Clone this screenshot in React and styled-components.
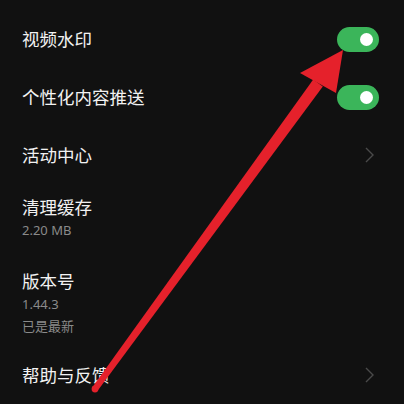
import React from "react";
import styled, { createGlobalStyle } from "styled-components";

const Global = createGlobalStyle`
  html, body { margin: 0; padding: 0; background: #111111; }
  body { font-family: "Noto Sans", "Noto Sans CJK SC", sans-serif; }
`;

const Page = styled.div`
  position: relative;
  width: 404px;
  height: 404px;
  overflow: hidden;
  background: #111111;
  padding-top: 10px;
  box-sizing: border-box;
`;

const Row = styled.div`
  display: flex;
  align-items: center;
  justify-content: space-between;
  padding: ${(p) => p.$pt ?? 0}px 25px ${(p) => p.$pb ?? 0}px 22px;
  min-height: ${(p) => (p.$single ? 58 : 0)}px;
  box-sizing: border-box;
`;

const TextCol = styled.div`
  display: flex;
  flex-direction: column;
`;

const Title = styled.div`
  font-family: "Noto Sans CJK SC", "Noto Sans", sans-serif;
  font-size: 17.5px;
  line-height: 24px;
  color: #f2f2f2;
`;

const Sub = styled.div`
  font-family: "Noto Sans", "Noto Sans CJK SC", sans-serif;
  font-size: 13px;
  line-height: 22px;
  color: #8a8a8a;
`;

const Toggle = styled.div`
  width: 42px;
  height: 25px;
  border-radius: 13px;
  background: #3bb55a;
  display: flex;
  align-items: center;
  justify-content: flex-end;
  padding-right: 6px;
  box-sizing: border-box;
`;

const Knob = styled.div`
  width: 13px;
  height: 13px;
  border-radius: 50%;
  background: #ffffff;
`;

const Chevron = styled.svg`
  width: 9px;
  height: 16px;
  margin-right: 5px;
`;

const Overlay = styled.svg`
  position: absolute;
  left: 0;
  top: 0;
  width: 404px;
  height: 404px;
  pointer-events: none;
`;

const ChevronIcon = () => (
  <Chevron viewBox="0 0 9 16">
    <path d="M1 1 L8 8 L1 15" fill="none" stroke="#4a4a4a" strokeWidth="1.4" />
  </Chevron>
);

const Switch = () => (
  <Toggle>
    <Knob />
  </Toggle>
);

export default function App() {
  return (
    <>
      <Global />
      <Page>
        <Row $single>
          <Title>视频水印</Title>
          <Switch />
        </Row>
        <Row $single>
          <Title>个性化内容推送</Title>
          <Switch />
        </Row>
        <Row $single>
          <Title>活动中心</Title>
          <ChevronIcon />
        </Row>
        <Row $pt={11} $pb={17}>
          <TextCol>
            <Title>清理缓存</Title>
            <Sub>2.20 MB</Sub>
          </TextCol>
        </Row>
        <Row $pt={11} $pb={9}>
          <TextCol>
            <Title>版本号</Title>
            <Sub>1.44.3</Sub>
            <Sub>已是最新</Sub>
          </TextCol>
        </Row>
        <Row $single>
          <Title>帮助与反馈</Title>
          <ChevronIcon />
        </Row>
        <Overlay viewBox="0 0 404 404">
          <polygon
            points="92.4,387.2 313.2,79.5 322.8,86.5 97.6,390.8"
            fill="#e5212b"
          />
          <circle cx="95" cy="389" r="3.4" fill="#e5212b" />
          <polygon points="343,50 300,73 336,93" fill="#e5212b" />
        </Overlay>
      </Page>
    </>
  );
}
